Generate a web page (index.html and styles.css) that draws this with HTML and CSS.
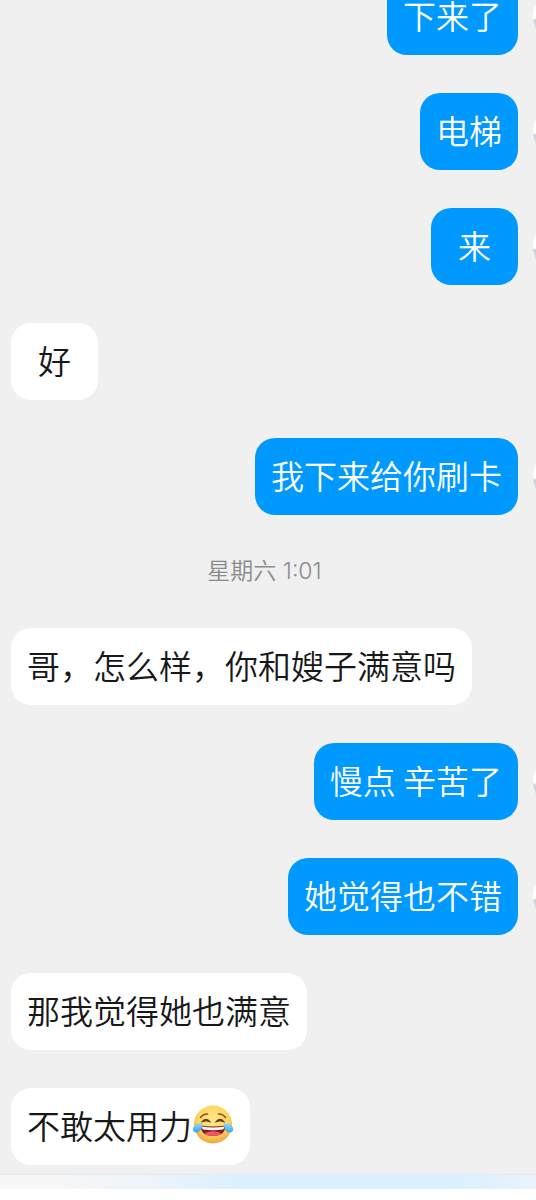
FILE: index.html
```
<!DOCTYPE html>
<html lang="zh-CN">
<head>
<meta charset="utf-8">
<meta name="viewport" content="width=device-width, initial-scale=1">
<title>聊天</title>
<link rel="stylesheet" href="styles.css">
</head>
<body>
<main class="chat">
  <div class="row sent"><p class="bubble">下来了</p><span class="avatar"></span></div>
  <div class="row sent"><p class="bubble">电梯</p><span class="avatar"></span></div>
  <div class="row sent"><p class="bubble">来</p><span class="avatar"></span></div>
  <div class="row"><p class="bubble">好</p></div>
  <div class="row sent"><p class="bubble">我下来给你刷卡</p><span class="avatar"></span></div>
  <time class="time">星期六 1:01</time>
  <div class="row"><p class="bubble">哥，怎么样，你和嫂子满意吗</p></div>
  <div class="row sent"><p class="bubble">慢点 辛苦了</p><span class="avatar"></span></div>
  <div class="row sent"><p class="bubble">她觉得也不错</p><span class="avatar"></span></div>
  <div class="row"><p class="bubble">那我觉得她也满意</p></div>
  <div class="row"><p class="bubble">不敢太用力<svg class="emoji" viewBox="0 0 42 42" role="img" aria-label="笑哭">
    <defs>
      <radialGradient id="face" cx="50%" cy="38%" r="62%"><stop offset="0" stop-color="#ffe88a"/><stop offset=".65" stop-color="#fdd560"/><stop offset="1" stop-color="#eda43a"/></radialGradient>
      <linearGradient id="tear" x1="0" y1="0" x2="0" y2="1"><stop offset="0" stop-color="#9adcf9"/><stop offset="1" stop-color="#3ba5e8"/></linearGradient>
    </defs>
    <circle cx="21" cy="20.5" r="19" fill="url(#face)"/>
    <path d="M8.500 13.500Q11 10 15.500 10M26.500 10Q31 10 33.500 13.500" fill="none" stroke="#8a4b14" stroke-width="1.500" stroke-linecap="round"/>
    <path d="M9.500 18Q14 12.500 18.500 18Q14 15.500 9.500 18ZM23.500 18Q28 12.500 32.500 18Q28 15.500 23.500 18Z" fill="#5f2f0c" stroke="#5f2f0c" stroke-width="1" stroke-linejoin="round"/>
    <path d="M8.500 21.500Q21 23.500 33.500 21.500Q33 32 21 32Q9 32 8.500 21.500Z" fill="#8b1a1f"/>
    <path d="M9.500 22.500Q21 24.500 32.500 22.500Q32 25 30.500 25.500Q21 27 11.500 25.500Q10 25 9.500 22.500Z" fill="#fff"/>
    <path d="M12.500 29.500Q21 25 29.500 29.500Q26.500 32 21 32Q15.500 32 12.500 29.500Z" fill="#f0566a"/>
    <path d="M10 18.500Q10.500 26 6.500 28Q2.500 29.500 1 26.500Q0 22.500 4 20.500Q7.500 19.500 10 18.500Z" fill="url(#tear)"/>
    <path d="M32 18.500Q31.500 26 35.500 28Q39.500 29.500 41 26.500Q42 22.500 38 20.500Q34.500 19.500 32 18.500Z" fill="url(#tear)"/>
  </svg></p></div>
</main>
<footer class="bar"></footer>
</body>
</html>
```
FILE: styles.css
```
body {
  margin: 0;
  background: #fff;
  font-family: "Noto Sans CJK SC", sans-serif;
}

.chat {
  display: flex;
  flex-direction: column;
  gap: 38px;
  padding-bottom: 9px;
  background: #f0f0f0;
  overflow: hidden;
}

.chat > :first-child {
  margin-top: -22px;
}

.row {
  position: relative;
  display: flex;
  padding: 0 18px 0 11px;
}

.sent {
  justify-content: flex-end;
}

.bubble {
  box-sizing: border-box;
  display: flex;
  align-items: center;
  justify-content: center;
  min-width: 87px;
  min-height: 77px;
  margin: 0;
  padding: 12px 16px 15px;
  border-radius: 20px;
  background: #fff;
  color: #17181a;
  font-size: 33px;
  font-weight: 350;
  line-height: 48px;
}

.sent .bubble {
  background: #0099ff;
  color: #fff;
}

.avatar {
  position: absolute;
  top: 6px;
  right: -61px;
  width: 64px;
  height: 64px;
  border-radius: 50%;
  background: linear-gradient(#e9e9ea 18px, #fff 24px, #fff 34px, #c9cedb 36px, #e2e4ea 46px);
}

.time {
  padding: 0 18px 0 11px;
  color: #8b8b8d;
  font-family: Inter, "Noto Sans CJK SC", sans-serif;
  font-size: 23px;
  font-weight: 350;
  line-height: 37px;
  text-align: center;
}

.emoji {
  width: 42px;
  height: 42px;
}

.bar {
  height: 14px;
  border-top: 1px solid #e3eaf0;
  background: linear-gradient(90deg, #f7f7f7 10%, #edf4fb 28%, #daf0fe 45%, #daf0fe 85%, #eaf3fb);
}
```
